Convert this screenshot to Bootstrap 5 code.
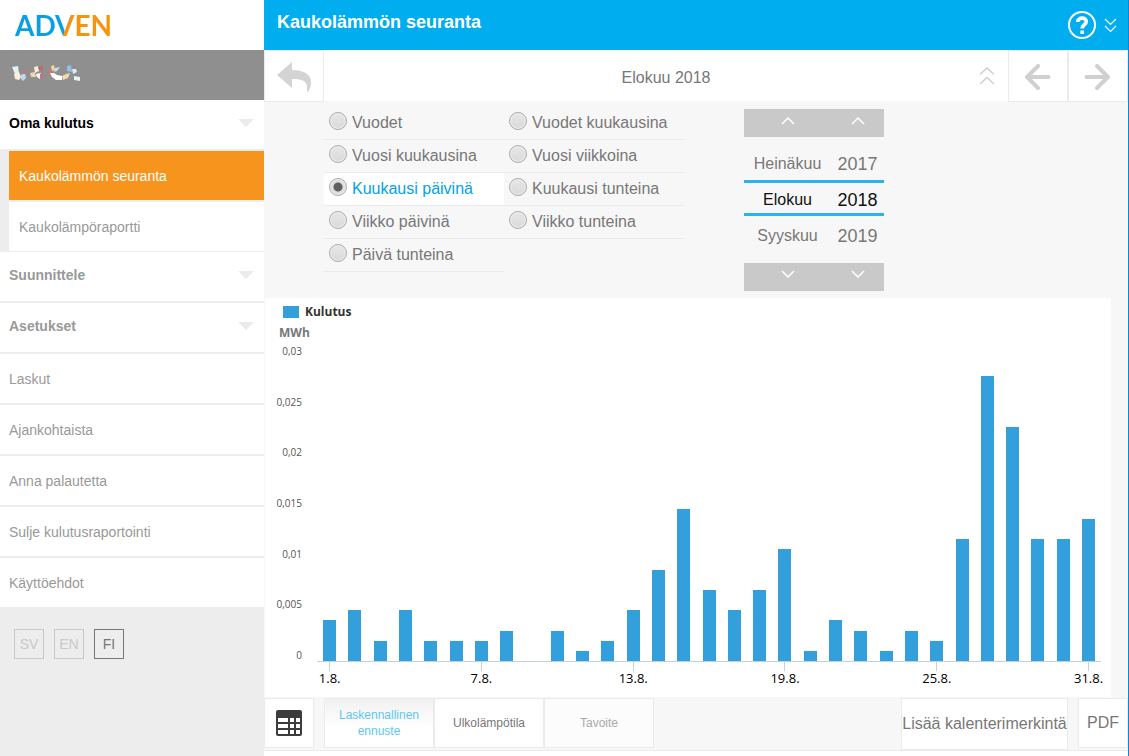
<!DOCTYPE html>
<html lang="fi">
<head>
<meta charset="utf-8">
<meta name="viewport" content="width=device-width, initial-scale=1">
<title>Kaukolämmön seuranta</title>
<link href="https://cdn.jsdelivr.net/npm/bootstrap@5.3.0/dist/css/bootstrap.min.css" rel="stylesheet">
<style>
body { font-family: "Liberation Sans", Arial, sans-serif; font-size: 16px; line-height: 20px; color: #777; background: #f7f7f7; }
svg { display: block; }
a { text-decoration: none; color: inherit; }
button { font-family: inherit; }

/* sidebar */
.side { width: 264px; background: #ededed; }
.brand-row { height: 50px; padding: 1px 15px 0; }
.adven { font: 700 28px/48px Lato, sans-serif; color: transparent; background: linear-gradient(112deg, #0a9fe3 53%, #f7940b 53%); -webkit-background-clip: text; background-clip: text; }
.user-row { height: 50px; background: #8f8f8f; padding: 0 12px; }
.side-link { height: 51px; font-size: 14px; color: #999; background: #fff; border: 0; border-bottom: 2px solid #ededed; padding: 0 10px 0 9px; text-align: left; }
.side-link:last-child { border-bottom: 0; height: 49px; }
.side-head { font-weight: 700; padding-bottom: 4px; }
.side-head.current { color: #000; }
.sub-list { padding-left: 9px; }
.sub-list .side-link { padding-left: 10px; }
.sub-list .side-link:last-child { height: 50px; border-bottom: 1px solid #ededed; }
.sub-list .side-link.current { background: #f7941e; color: #fff; }
.lang { padding: 22px 14px; gap: 10px; }
.lang-btn { width: 30px; height: 30px; border: 1px solid #c9c9c9; background: none; color: #c9c9c9; font-size: 14px; padding: 0; }
.lang-btn.current { border-color: #777; color: #777; }

/* main column */
.main-col { border-right: 1px solid #1083d6; min-width: 0; }
.top-bar { height: 50px; background: #00aef0; color: #fff; padding: 0 11px 0 13px; }
.top-bar h1 { font-size: 18px; line-height: 20px; font-weight: 700; padding-bottom: 6px; }
.tool-row { height: 51px; background: #fff; }
.tool-btn { width: 60px; height: 52px; background: #fff; border: 1px solid #ebebeb; padding: 2px 2px 0 0; }
.back-btn { padding-right: 0; }
.flat { background: none; border: 0; padding: 0; }
.collapse-up { padding-right: 14px; }

.options { padding: 6px 60px; gap: 60px; min-height: 197px; }
.modes { width: 360px; }
.mode { width: 180px; height: 33px; border-bottom: 1px solid #ebebeb; padding: 0 0 0 5px; gap: 5px; cursor: pointer; }
.mode.current { background: #fff; color: #00a4e8; }
.mode input { appearance: none; width: 18px; height: 18px; margin: 0 0 4px; border: 1px solid #aaa; border-radius: 50%; background: linear-gradient(#e6e6e6, #dadada); box-shadow: inset 0 0 0 1px #f0f0f0; flex: none; }
.mode input:checked { background: radial-gradient(circle, #606060 4px, #dedede 5px); }

.picker { width: 140px; margin-top: 2px; }
.picker-bar { height: 28px; background: #c9c9c9; }
.picker-bar button { height: 28px; padding-bottom: 4px; }
.picker-bar.down button { padding-bottom: 7px; }
.month { width: 87px; text-align: center; }
.year { width: 53px; text-align: center; font-size: 18px; }
.picker-row { height: 36px; padding-top: 4px; }
.picker-row.current { color: #111; border: solid #27b5ee; border-width: 3px 0; }
.picker-window { padding: 7px 0 10px; height: 126px; }

/* chart */
.chart { background: #fff; margin: 0 17px 0 1px; padding: 7px 10px 0; font-family: "Open Sans", "Noto Sans", sans-serif; }
.legend-key { width: 16px; height: 12px; background: #33a0dc; }
.legend { color: #333; font-size: 12px; line-height: 14px; font-weight: 700; padding-left: 8px; gap: 6px; }
.unit { font-size: 12px; line-height: 14px; font-weight: 700; color: #777; padding: 7px 4px 6px; }
.plot-row { height: 316px; }
.y-labels { width: 27px; font-size: 10px; line-height: 10px; color: #555; height: 314px; margin-right: 15px; }
.y-labels span { white-space: nowrap; }
.bars { border-bottom: 1px solid #c0d0e0; }
.day { flex: 1 1 0; min-width: 0; }
.bar { width: 13px; background: #33a0dc; height: calc(var(--v) * 100% / 31); }
.x-axis { margin-left: 42px; height: 35px; }
.x-axis .day { font-size: 13px; line-height: 14px; color: #000; }
.x-axis .day.tick::before { content: ""; width: 1px; height: 9px; flex: none; background: #c0d0e0; }

/* bottom bar */
.bottom-row { padding-top: 1px; border-bottom: 1px solid #ebebeb; height: 54px; gap: 10px; }
.foot { height: 5px; background: #fff; }
.box-btn { height: 50px; background: #fff; border: 1px solid #ebebeb; padding: 0; color: #777; }
.square { width: 50px; }
.tab-btn { width: 110px; font-size: 12px; line-height: 16px; }
.tab-btn.current { color: #5cc8f2; background: linear-gradient(#f1f1f1, #fff 60%); }
.tab-btn.off { color: #aaa; background: #fcfcfc; }
.entry-btn { width: 167px; height: 52px; white-space: nowrap; }
</style>
</head>
<body>
<div class="d-flex min-vh-100">

  <aside class="side flex-shrink-0">
    <div class="brand-row bg-white"><a href="#" class="adven d-inline-block">ADVEN</a></div>
    <div class="user-row d-flex align-items-center">
      <svg width="70" height="20" viewBox="0 0 70 20" role="img" aria-label="Käyttäjä">
        <path d="M0 2l6-1 1 7-4 1z" fill="#e0f3f5"/><path d="M2 9l5-2 2 5-2 3-4-1z" fill="#fff0d8"/><path d="M9 10l4-2 1 5-3 3-2-2z" fill="#b9dbf7"/><path d="M11 6l4 0-1 3-3 0z" fill="#c87878"/>
        <path d="M22 2l4-1 1 5-4 2z" fill="#fbecd9"/><path d="M26 2l5-1v5l-4-1z" fill="#b96e6e"/><path d="M18 8l5-1 1 5-5 0z" fill="#f3d3a9"/><path d="M24 9l5-1-1 6-3-2z" fill="#fff"/><path d="M28 9l3-1v6l-3-1z" fill="#bd7777"/>
        <path d="M36 6l3-2 3 2-2 3-5-1z" fill="#c87878"/><path d="M39 1l3-1 1 5-3 1z" fill="#f5d78b"/><path d="M43 3l5-1-3 4-3 1z" fill="#bfe1f4"/><path d="M38 8l4 0 3 2 5 1v4l-6 0-4-3z" fill="#fff"/><path d="M50 11l4-2 4-1-2 5-5 2z" fill="#f7d7b1"/><path d="M55 1l4-1 1 7-5-1z" fill="#90c2e9"/><path d="M60 4l4 0 1 3-4 2z" fill="#d4edf6"/><path d="M62 11l6 1v4l-6-1z" fill="#e4f5f4"/>
      </svg>
    </div>
    <nav class="d-flex flex-column">
      <button type="button" class="side-link side-head current d-flex align-items-center justify-content-between">Oma kulutus<svg width="16" height="8"><path d="M0 0h16l-8 8z" fill="#ebebeb"/></svg></button>
      <div class="sub-list d-flex flex-column">
        <a href="#" class="side-link current d-flex align-items-center" aria-current="page">Kaukolämmön seuranta</a>
        <a href="#" class="side-link d-flex align-items-center">Kaukolämpöraportti</a>
      </div>
      <button type="button" class="side-link side-head d-flex align-items-center justify-content-between">Suunnittele<svg width="16" height="8"><path d="M0 0h16l-8 8z" fill="#ebebeb"/></svg></button>
      <button type="button" class="side-link side-head d-flex align-items-center justify-content-between">Asetukset<svg width="16" height="8"><path d="M0 0h16l-8 8z" fill="#ebebeb"/></svg></button>
      <a href="#" class="side-link d-flex align-items-center">Laskut</a>
      <a href="#" class="side-link d-flex align-items-center">Ajankohtaista</a>
      <a href="#" class="side-link d-flex align-items-center">Anna palautetta</a>
      <a href="#" class="side-link d-flex align-items-center">Sulje kulutusraportointi</a>
      <a href="#" class="side-link d-flex align-items-center">Käyttöehdot</a>
    </nav>
    <div class="lang d-flex">
      <button type="button" class="lang-btn">SV</button>
      <button type="button" class="lang-btn">EN</button>
      <button type="button" class="lang-btn current">FI</button>
    </div>
  </aside>

  <main class="main-col flex-grow-1 d-flex flex-column">
    <header class="top-bar d-flex align-items-center">
      <h1 class="m-0 me-auto">Kaukolämmön seuranta</h1>
      <button type="button" class="flat me-2" aria-label="Ohje"><svg width="28" height="28" viewBox="0 0 28 28" fill="none" stroke="#fff"><circle cx="14" cy="14" r="13" stroke-width="2"/><path d="M9.600 11C9.800 5.800 18.300 6 18.300 10.500c0 3.300-4.100 3.200-4.100 7" stroke-width="3.600"/><path d="M12.400 19.500h3.600v3.500h-3.600z" fill="#fff" stroke="none"/></svg></button>
      <button type="button" class="flat" aria-label="Avaa"><svg width="13" height="15" viewBox="0 0 13 15" fill="none" stroke="#fff" stroke-width="1.200"><path d="M1 1l5.500 5.500L12 1M1 8l5.500 5.500L12 8"/></svg></button>
    </header>

    <div class="tool-row d-flex align-items-start">
      <button type="button" class="tool-btn back-btn d-flex align-items-center justify-content-center" aria-label="Takaisin"><svg width="36" height="31" viewBox="0 0 36 31"><path d="M1 13L16 0v8c13 0 19 5 19 12 0 4-1 7-3 10h-1c1-10-2-13-15-13v9z" fill="#d4d4d4"/></svg></button>
      <div class="flex-grow-1 d-flex align-items-center align-self-stretch">
        <span class="flex-grow-1 text-center ps-4 ms-1 pt-1">Elokuu 2018</span>
        <button type="button" class="flat collapse-up" aria-label="Sulje valinnat"><svg width="14" height="18" viewBox="0 0 14 18" fill="none" stroke="#cfcfcf" stroke-width="1.500"><path d="M0 7.500l7-6.500 7 6.500M0 17l7-6.500 7 6.500"/></svg></button>
      </div>
      <button type="button" class="tool-btn d-flex align-items-center justify-content-center" aria-label="Edellinen"><svg width="27" height="26" viewBox="0 0 27 26" fill="none" stroke="#d0d0d0" stroke-width="4" stroke-linecap="round" stroke-linejoin="round"><path d="M14 2L3 13l11 11M3 13h21.500"/></svg></button>
      <button type="button" class="tool-btn d-flex align-items-center justify-content-center" aria-label="Seuraava"><svg width="27" height="26" viewBox="0 0 27 26" fill="none" stroke="#d0d0d0" stroke-width="4" stroke-linecap="round" stroke-linejoin="round"><path d="M13 2l11 11-11 11M24 13H2.500"/></svg></button>
    </div>

    <section class="options d-flex align-items-start">
      <div class="modes d-flex flex-wrap flex-shrink-0" role="radiogroup" aria-label="Näkymä">
        <label class="mode d-flex align-items-center"><input type="radio" name="mode">Vuodet</label>
        <label class="mode d-flex align-items-center"><input type="radio" name="mode">Vuodet kuukausina</label>
        <label class="mode d-flex align-items-center"><input type="radio" name="mode">Vuosi kuukausina</label>
        <label class="mode d-flex align-items-center"><input type="radio" name="mode">Vuosi viikkoina</label>
        <label class="mode current d-flex align-items-center"><input type="radio" name="mode" checked>Kuukausi päivinä</label>
        <label class="mode d-flex align-items-center"><input type="radio" name="mode">Kuukausi tunteina</label>
        <label class="mode d-flex align-items-center"><input type="radio" name="mode">Viikko päivinä</label>
        <label class="mode d-flex align-items-center"><input type="radio" name="mode">Viikko tunteina</label>
        <label class="mode d-flex align-items-center"><input type="radio" name="mode">Päivä tunteina</label>
      </div>
      <div class="picker flex-shrink-0">
        <div class="picker-bar d-flex">
          <button type="button" class="flat month d-flex align-items-center justify-content-center" aria-label="Edellinen kuukausi"><svg width="14" height="8" viewBox="0 0 14 8" fill="none" stroke="#fff" stroke-width="1.500"><path d="M1 7l6-6 6 6"/></svg></button>
          <button type="button" class="flat year d-flex align-items-center justify-content-center" aria-label="Edellinen vuosi"><svg width="14" height="8" viewBox="0 0 14 8" fill="none" stroke="#fff" stroke-width="1.500"><path d="M1 7l6-6 6 6"/></svg></button>
        </div>
        <div class="picker-window">
          <div class="picker-row d-flex align-items-center"><span class="month">Heinäkuu</span><span class="year">2017</span></div>
          <div class="picker-row current d-flex align-items-center"><span class="month">Elokuu</span><span class="year">2018</span></div>
          <div class="picker-row d-flex align-items-center"><span class="month">Syyskuu</span><span class="year">2019</span></div>
        </div>
        <div class="picker-bar down d-flex">
          <button type="button" class="flat month d-flex align-items-center justify-content-center" aria-label="Seuraava kuukausi"><svg width="14" height="8" viewBox="0 0 14 8" fill="none" stroke="#fff" stroke-width="1.500"><path d="M1 1l6 6 6-6"/></svg></button>
          <button type="button" class="flat year d-flex align-items-center justify-content-center" aria-label="Seuraava vuosi"><svg width="14" height="8" viewBox="0 0 14 8" fill="none" stroke="#fff" stroke-width="1.500"><path d="M1 1l6 6 6-6"/></svg></button>
        </div>
      </div>
    </section>

    <section class="chart">
      <div class="legend d-flex align-items-center"><span class="legend-key"></span>Kulutus</div>
      <div class="unit">MWh</div>
      <div class="plot-row d-flex">
        <div class="y-labels d-flex flex-column justify-content-between align-items-end">
          <span>0,03</span><span>0,025</span><span>0,02</span><span>0,015</span><span>0,01</span><span>0,005</span><span>0</span>
        </div>
        <div class="bars flex-grow-1 d-flex align-items-end">
          <div class="day h-100 d-flex align-items-end justify-content-center"><div class="bar" style="--v:4"></div></div>
          <div class="day h-100 d-flex align-items-end justify-content-center"><div class="bar" style="--v:5"></div></div>
          <div class="day h-100 d-flex align-items-end justify-content-center"><div class="bar" style="--v:2"></div></div>
          <div class="day h-100 d-flex align-items-end justify-content-center"><div class="bar" style="--v:5"></div></div>
          <div class="day h-100 d-flex align-items-end justify-content-center"><div class="bar" style="--v:2"></div></div>
          <div class="day h-100 d-flex align-items-end justify-content-center"><div class="bar" style="--v:2"></div></div>
          <div class="day h-100 d-flex align-items-end justify-content-center"><div class="bar" style="--v:2"></div></div>
          <div class="day h-100 d-flex align-items-end justify-content-center"><div class="bar" style="--v:3"></div></div>
          <div class="day h-100 d-flex align-items-end justify-content-center"><div class="bar" style="--v:0"></div></div>
          <div class="day h-100 d-flex align-items-end justify-content-center"><div class="bar" style="--v:3"></div></div>
          <div class="day h-100 d-flex align-items-end justify-content-center"><div class="bar" style="--v:1"></div></div>
          <div class="day h-100 d-flex align-items-end justify-content-center"><div class="bar" style="--v:2"></div></div>
          <div class="day h-100 d-flex align-items-end justify-content-center"><div class="bar" style="--v:5"></div></div>
          <div class="day h-100 d-flex align-items-end justify-content-center"><div class="bar" style="--v:9"></div></div>
          <div class="day h-100 d-flex align-items-end justify-content-center"><div class="bar" style="--v:15"></div></div>
          <div class="day h-100 d-flex align-items-end justify-content-center"><div class="bar" style="--v:7"></div></div>
          <div class="day h-100 d-flex align-items-end justify-content-center"><div class="bar" style="--v:5"></div></div>
          <div class="day h-100 d-flex align-items-end justify-content-center"><div class="bar" style="--v:7"></div></div>
          <div class="day h-100 d-flex align-items-end justify-content-center"><div class="bar" style="--v:11"></div></div>
          <div class="day h-100 d-flex align-items-end justify-content-center"><div class="bar" style="--v:1"></div></div>
          <div class="day h-100 d-flex align-items-end justify-content-center"><div class="bar" style="--v:4"></div></div>
          <div class="day h-100 d-flex align-items-end justify-content-center"><div class="bar" style="--v:3"></div></div>
          <div class="day h-100 d-flex align-items-end justify-content-center"><div class="bar" style="--v:1"></div></div>
          <div class="day h-100 d-flex align-items-end justify-content-center"><div class="bar" style="--v:3"></div></div>
          <div class="day h-100 d-flex align-items-end justify-content-center"><div class="bar" style="--v:2"></div></div>
          <div class="day h-100 d-flex align-items-end justify-content-center"><div class="bar" style="--v:12"></div></div>
          <div class="day h-100 d-flex align-items-end justify-content-center"><div class="bar" style="--v:28"></div></div>
          <div class="day h-100 d-flex align-items-end justify-content-center"><div class="bar" style="--v:23"></div></div>
          <div class="day h-100 d-flex align-items-end justify-content-center"><div class="bar" style="--v:12"></div></div>
          <div class="day h-100 d-flex align-items-end justify-content-center"><div class="bar" style="--v:12"></div></div>
          <div class="day h-100 d-flex align-items-end justify-content-center"><div class="bar" style="--v:14"></div></div>
        </div>
      </div>
      <div class="x-axis d-flex">
        <div class="day tick d-flex flex-column align-items-center">1.8.</div><div class="day"></div><div class="day"></div><div class="day"></div><div class="day"></div><div class="day"></div>
        <div class="day tick d-flex flex-column align-items-center">7.8.</div><div class="day"></div><div class="day"></div><div class="day"></div><div class="day"></div><div class="day"></div>
        <div class="day tick d-flex flex-column align-items-center">13.8.</div><div class="day"></div><div class="day"></div><div class="day"></div><div class="day"></div><div class="day"></div>
        <div class="day tick d-flex flex-column align-items-center">19.8.</div><div class="day"></div><div class="day"></div><div class="day"></div><div class="day"></div><div class="day"></div>
        <div class="day tick d-flex flex-column align-items-center">25.8.</div><div class="day"></div><div class="day"></div><div class="day"></div><div class="day"></div><div class="day"></div>
        <div class="day tick d-flex flex-column align-items-center">31.8.</div>
      </div>
    </section>

    <div class="bottom-row d-flex align-items-start">
      <button type="button" class="box-btn square d-flex align-items-center justify-content-center" aria-label="Taulukko"><svg width="26" height="26" viewBox="0 0 26 26"><rect width="26" height="26" rx="2" fill="#3c3c3c"/><path d="M2 8h10v4H2zm12 0h4v4h-4zm6 0h4v4h-4zM2 14h10v4H2zm12 0h4v4h-4zm6 0h4v4h-4zM2 20h10v4H2zm12 0h4v4h-4zm6 0h4v4h-4z" fill="#fff"/></svg></button>
      <div class="d-flex me-auto">
        <button type="button" class="box-btn tab-btn current">Laskennallinen<br>ennuste</button>
        <button type="button" class="box-btn tab-btn">Ulkolämpötila</button>
        <button type="button" class="box-btn tab-btn off">Tavoite</button>
      </div>
      <button type="button" class="box-btn entry-btn">Lisää kalenterimerkintä</button>
      <button type="button" class="box-btn square">PDF</button>
    </div>
    <div class="foot flex-grow-1"></div>
  </main>
</div>
<script src="https://cdn.jsdelivr.net/npm/bootstrap@5.3.0/dist/js/bootstrap.bundle.min.js"></script>
</body>
</html>
